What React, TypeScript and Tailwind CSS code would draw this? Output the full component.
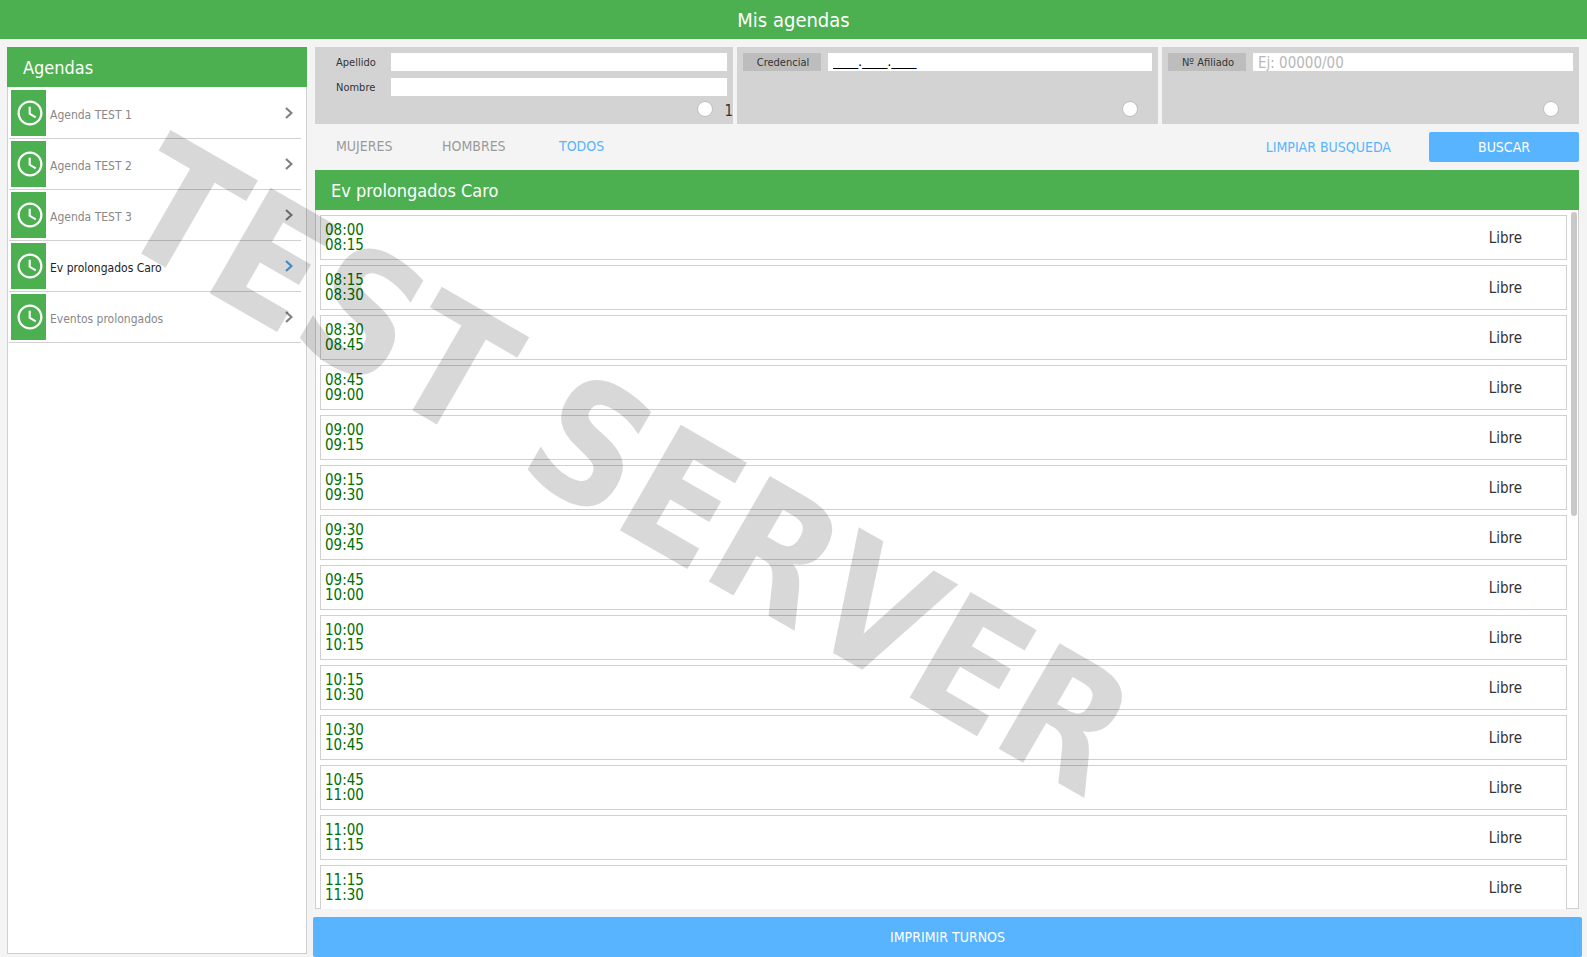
import { useState, type ReactNode } from "react";

const agendas = [
  "Agenda TEST 1",
  "Agenda TEST 2",
  "Agenda TEST 3",
  "Ev prolongados Caro",
  "Eventos prolongados",
];

const generos = [
  { name: "MUJERES", className: "ml-[21px] w-[106px]" },
  { name: "HOMBRES", className: "w-[117px]" },
  { name: "TODOS", className: "" },
];

const formatTime = (minutes: number) => {
  const h = String(Math.floor(minutes / 60)).padStart(2, "0");
  const m = String(minutes % 60).padStart(2, "0");
  return `${h}:${m}`;
};

// Turnos de 15 minutos desde las 08:00
const turnos = Array.from({ length: 14 }, (_, i) => ({
  desde: formatTime(480 + i * 15),
  hasta: formatTime(495 + i * 15),
  estado: "Libre",
}));

const ClockIcon = () => (
  <svg viewBox="0 0 24 24" className="size-[30px] fill-white" aria-hidden="true">
    <path d="M12 2C6.5 2 2 6.5 2 12s4.5 10 10 10 10-4.5 10-10S17.5 2 12 2zm0 18.200c-4.500 0-8.200-3.700-8.200-8.200S7.500 3.800 12 3.800s8.200 3.700 8.200 8.200-3.700 8.200-8.200 8.200z" />
    <path d="M12.600 7h-1.700v6l5.250 3.150.85-1.300-4.400-2.600z" />
  </svg>
);

const ChevronIcon = ({ active }: { active: boolean }) => (
  <svg
    viewBox="0 0 8 12"
    className={active ? "h-3 w-2 text-[#4da3e8]" : "h-3 w-2 text-[#808080]"}
    fill="none"
    stroke="currentColor"
    strokeWidth="2.200"
    aria-hidden="true"
  >
    <path d="M1 1l5.500 5L1 11" />
  </svg>
);

const FilterPanel = ({ label, children, extra }: { label: string; children: ReactNode; extra?: string }) => (
  <div className="relative h-[77px] bg-[#d3d3d3] px-1.5 pt-1.5">
    {children}
    <input
      type="radio"
      name="filtro"
      aria-label={label}
      className="absolute right-5 bottom-[7px] size-4 appearance-none rounded-full border border-[#bebebe] bg-white"
    />
    {extra && <span className="absolute right-0 bottom-[5px] text-[15px] leading-4">{extra}</span>}
  </div>
);

const Field = ({ id, label }: { id: string; label: string }) => (
  <div className="flex h-[18px] items-center">
    <label htmlFor={id} className="w-[70px] shrink-0 pt-0.5 pl-[15px] text-[11px]">
      {label}
    </label>
    <input id={id} type="text" className="h-full min-w-0 flex-1 bg-white px-1 text-[15px] outline-none" />
  </div>
);

const ButtonField = ({ label, value, placeholder }: { label: string; value?: string; placeholder?: string }) => (
  <div className="flex h-[18px] items-center gap-[7px]">
    <button type="button" className="h-full w-[78px] shrink-0 bg-[#bdbdbd] pt-px pl-0.5 text-[11px] leading-none">
      {label}
    </button>
    <input
      type="text"
      aria-label={label}
      defaultValue={value}
      placeholder={placeholder}
      className={`h-full min-w-0 flex-1 bg-white px-[5px] font-['Liberation_Sans',sans-serif] text-[15px] text-black outline-none placeholder:font-['DejaVu_Sans_Condensed','Noto_Sans',sans-serif] placeholder:text-[#b8b8b8] ${
        value ? "pb-[3px]" : ""
      }`}
    />
  </div>
);

const Sidebar = ({ selected, onSelect }: { selected: string; onSelect: (name: string) => void }) => (
  <aside className="mb-[3px] flex w-[300px] shrink-0 flex-col bg-white">
    <h2 className="flex h-10 shrink-0 items-center bg-[#4caf50] pt-0.5 pl-4 text-lg text-white">Agendas</h2>
    <ul className="flex-1 border border-t-0 border-[#d0d0d0] pt-px pr-[5px] pl-px">
      {agendas.map((name) => (
        <li key={name} className="border-b border-[#d0d0d0]">
          <button
            type="button"
            onClick={() => onSelect(name)}
            className="flex h-[50px] w-full items-center pr-2 pl-0.5 text-left"
          >
            <span className="flex h-[46px] w-[35px] items-center bg-[#4caf50] pl-1">
              <ClockIcon />
            </span>
            <span
              className={`flex-1 pt-1 pl-1 text-[12px] leading-4 ${
                name === selected ? "text-[#222]" : "text-[#888]"
              }`}
            >
              {name}
            </span>
            <ChevronIcon active={name === selected} />
          </button>
        </li>
      ))}
    </ul>
  </aside>
);

export default function App() {
  const [selected, setSelected] = useState("Ev prolongados Caro");
  const [genero, setGenero] = useState("TODOS");

  return (
    <div className="relative flex h-screen flex-col overflow-hidden bg-[#f4f4f4] font-['DejaVu_Sans_Condensed','Noto_Sans',sans-serif] text-[#333]">
      <header className="flex h-[39px] shrink-0 items-center justify-center bg-[#4caf50] pt-px">
        <h1 className="text-xl text-white">Mis agendas</h1>
      </header>

      <div className="flex min-h-0 flex-1 pt-2 pr-[5px] pl-[7px]">
        <Sidebar selected={selected} onSelect={setSelected} />

        <main className="ml-1.5 flex min-w-0 flex-1 flex-col">
          <div className="mr-[3px] ml-0.5 flex min-h-0 flex-1 flex-col">
            {/* Filtros */}
            <div className="grid shrink-0 grid-cols-[418fr_421fr_417fr] gap-1">
              <FilterPanel label="Buscar por nombre" extra="1">
                <div className="flex flex-col gap-[7px]">
                  <Field id="apellido" label="Apellido" />
                  <Field id="nombre" label="Nombre" />
                </div>
              </FilterPanel>
              <FilterPanel label="Buscar por credencial">
                <ButtonField label="Credencial" value="___.___.___" />
              </FilterPanel>
              <FilterPanel label="Buscar por afiliado">
                <ButtonField label="Nº Afiliado" placeholder="Ej: 00000/00" />
              </FilterPanel>
            </div>

            <div className="flex h-[46px] shrink-0 items-center text-sm">
              {generos.map((g) => (
                <button
                  key={g.name}
                  type="button"
                  onClick={() => setGenero(g.name)}
                  className={`pb-0.5 text-left ${g.className} ${g.name === genero ? "text-[#58b4ff]" : "text-[#9b9b9b]"}`}
                >
                  {g.name}
                </button>
              ))}
              <button type="button" className="mr-[38px] ml-auto text-[#58b4ff]">
                LIMPIAR BUSQUEDA
              </button>
              <button type="button" className="h-[30px] w-[150px] rounded-xs bg-[#58b4ff] text-white">
                BUSCAR
              </button>
            </div>

            {/* Turnos */}
            <h2 className="flex h-10 shrink-0 items-center bg-[#4caf50] pt-0.5 pl-4 text-lg text-white">{selected}</h2>
            <div className="relative flex min-h-0 flex-1 flex-col border border-t-0 border-[#d0d0d0] bg-white pt-[5px] pr-[11px] pl-1">
              <ul className="-mb-px flex min-h-0 flex-1 flex-col gap-[5px] overflow-y-auto [scrollbar-width:none]">
                {turnos.map((t) => (
                  <li
                    key={t.desde}
                    className="flex h-[45px] shrink-0 items-center justify-between border border-[#d0d0d0] bg-white pr-11 pl-1 text-[15px]"
                  >
                    <div className="leading-[15px] text-[#007000]">
                      <p>{t.desde}</p>
                      <p>{t.hasta}</p>
                    </div>
                    <span className="pt-0.5">{t.estado}</span>
                  </li>
                ))}
              </ul>
              <div className="absolute top-0.5 right-px h-[304px] w-1.5 rounded-full bg-[#c8c8c8]" />
            </div>
          </div>

          <button type="button" className="mt-2 h-10 shrink-0 rounded-xs bg-[#58b4ff] text-sm text-white">
            IMPRIMIR TURNOS
          </button>
        </main>
      </div>

      <div className="pointer-events-none absolute top-[384px] left-[62px] rotate-30 text-[167px] leading-none font-bold whitespace-nowrap text-black opacity-15 select-none">
        TEST SERVER
      </div>
    </div>
  );
}
